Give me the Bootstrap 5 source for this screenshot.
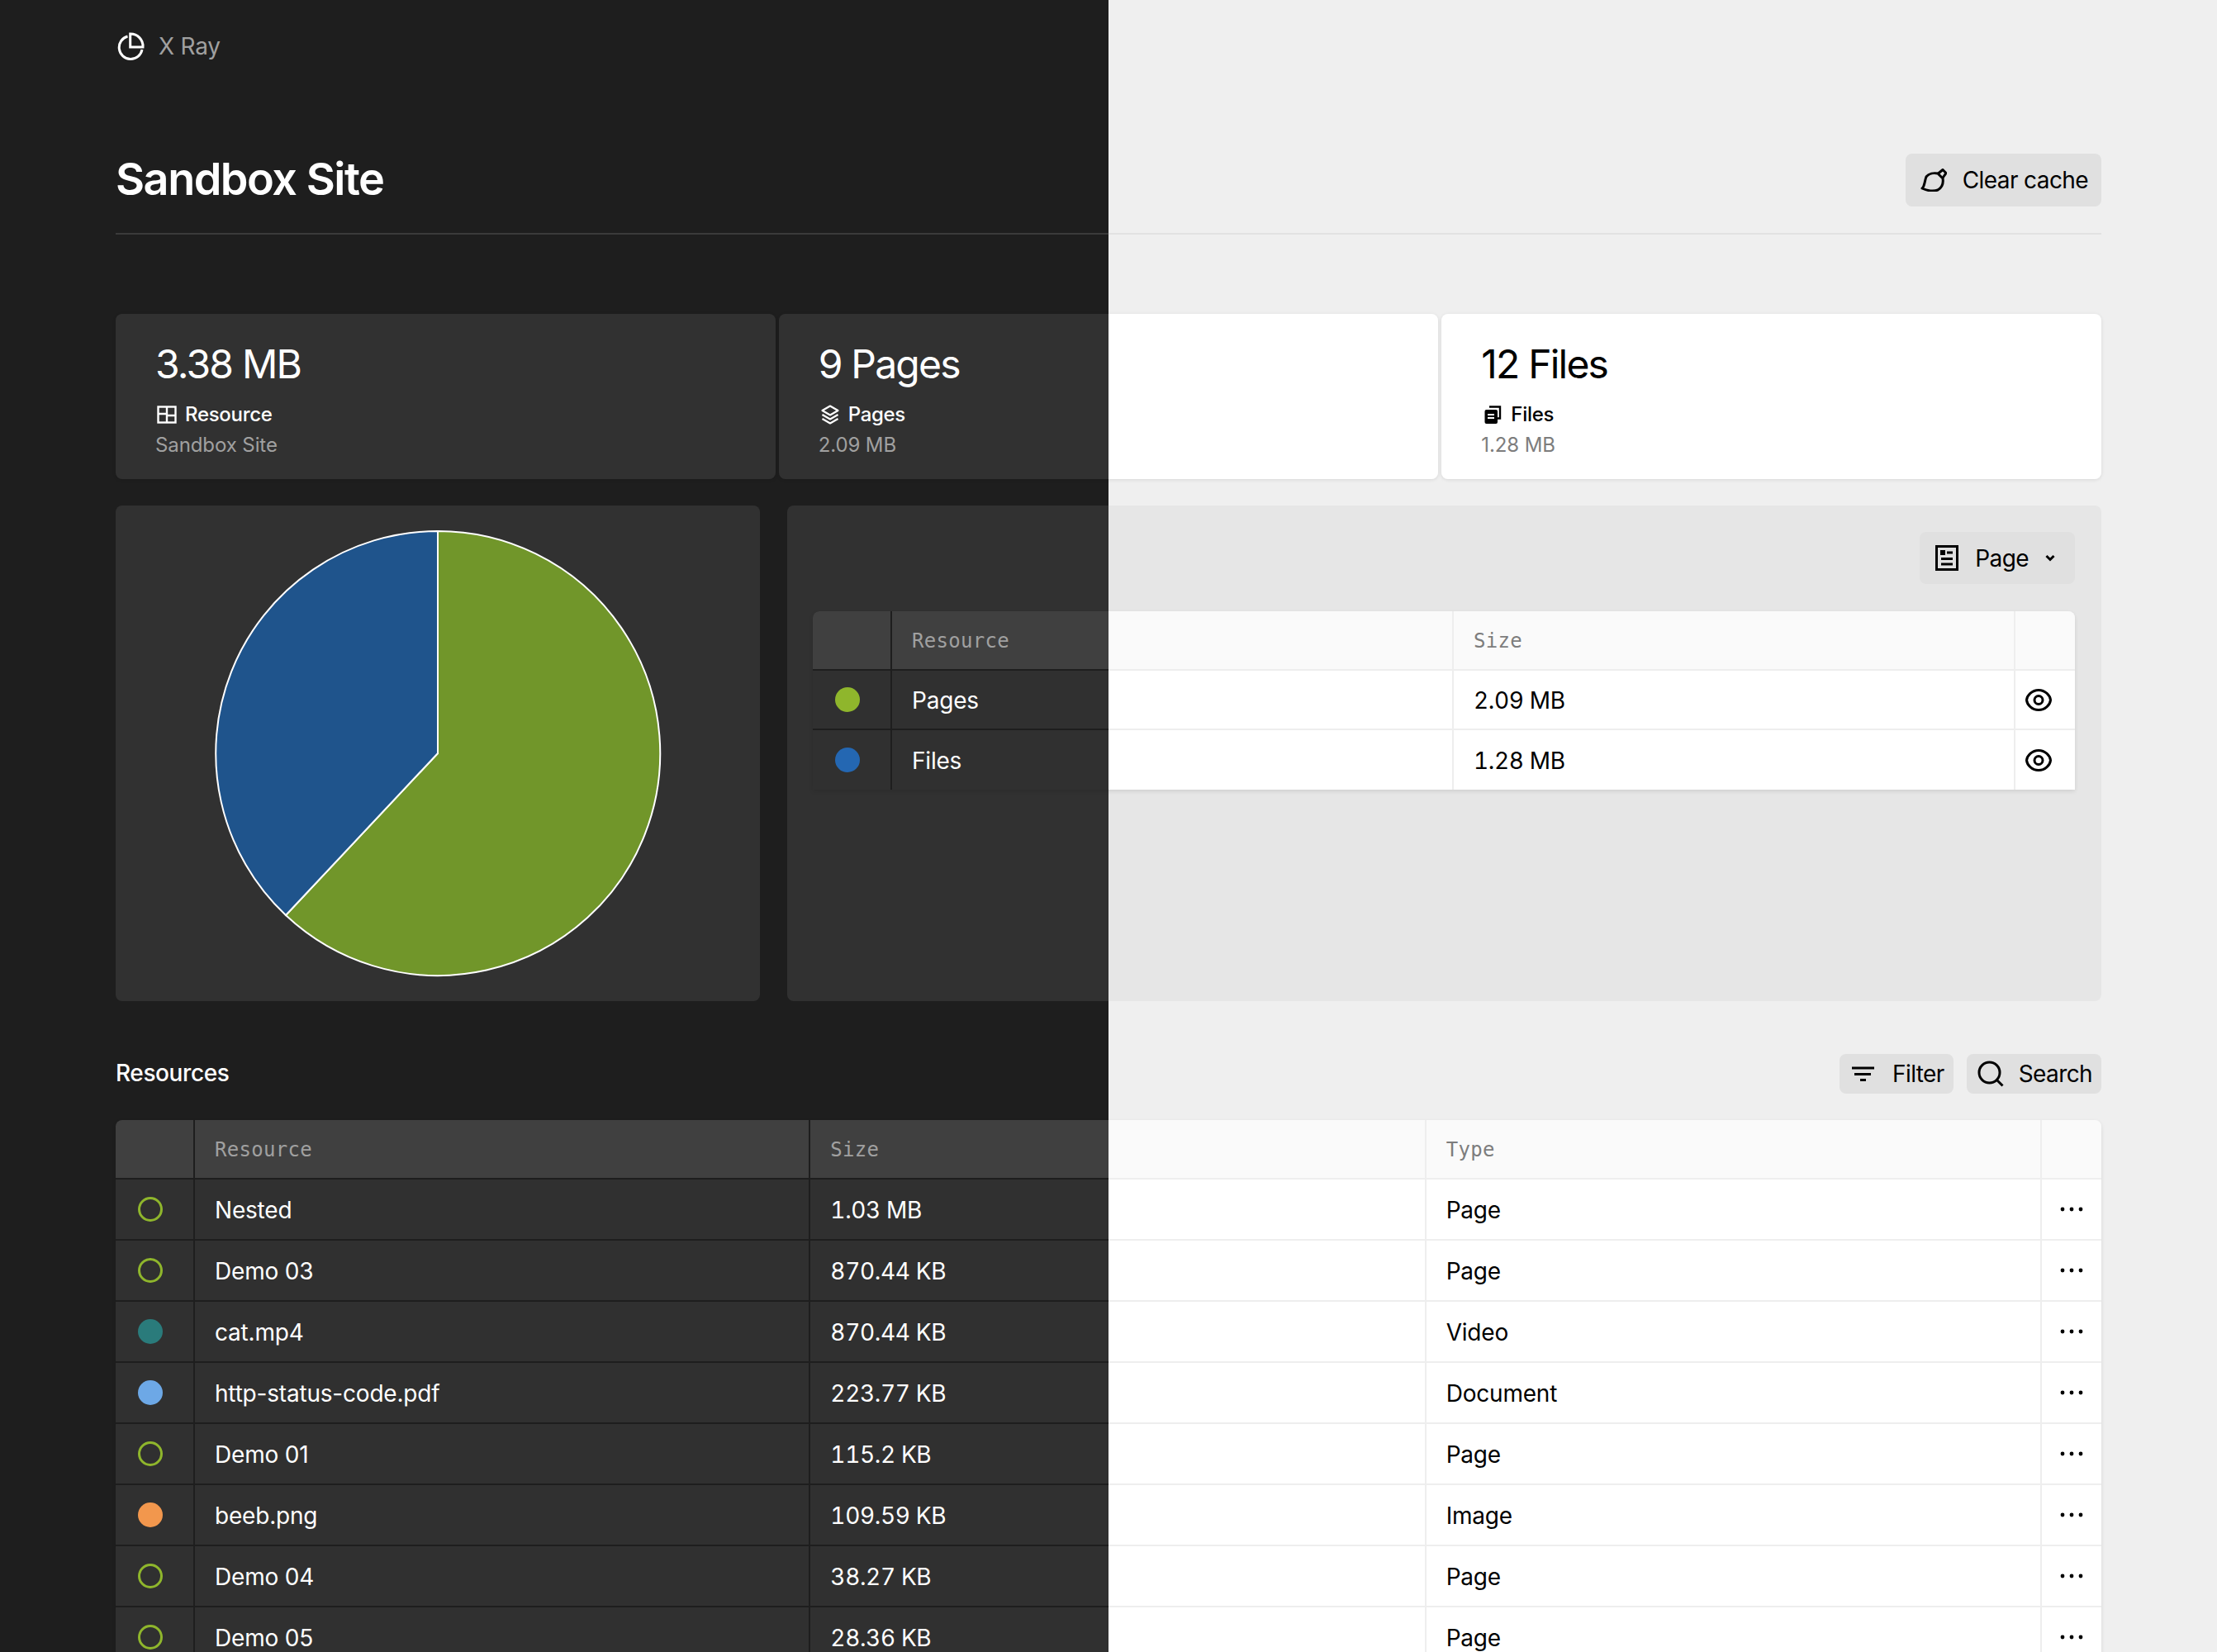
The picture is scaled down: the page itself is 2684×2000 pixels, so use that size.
<!DOCTYPE html>
<html lang="en">
<head>
  <meta charset="UTF-8">
  <title>X Ray</title>
  <meta name="viewport" content="width=device-width, initial-scale=1">
  <link href="https://cdn.jsdelivr.net/npm/bootstrap@5.3.0/dist/css/bootstrap.min.css" rel="stylesheet">
  <style>
    /* the page is split in dark/light at x=1342, surfaces share one fixed gradient */
    :root { --cut: 1342px; }
    html, body { height: 100%; }
    body { background: linear-gradient(90deg, #1e1e1e var(--cut), #efefef var(--cut)) fixed; font-family: Inter, "Liberation Sans", sans-serif; font-size: 28px; letter-spacing: -.2px; color: #000; overflow: hidden; }
    .sheet { height: 2000px; overflow: hidden; padding: 36px 140px 0; }
    .tx-d { color: #fff; }
    .tx-l { color: #000; }
    .tx-mute-d { color: #a0a0a0; }
    .tx-mute-l { color: #7d7d7d; }

    .topbar { height: 40px; gap: 16px; }
    .topbar svg { margin-left: 2px; }
    .head-row { height: 64px; margin-top: 110px; }
    .site-title { font-size: 54px; font-weight: 600; letter-spacing: -1.5px; margin: -2px 0 0; line-height: 64px; }
    .head-rule { height: 2px; margin: 32px 0 0; border: 0; opacity: 1; background: linear-gradient(90deg, #3a3a3a var(--cut), #e2e2e2 var(--cut)) fixed; }

    .tool-btn { --bs-btn-border-width: 0; --bs-btn-padding-x: 0; --bs-btn-padding-y: 0; --bs-btn-font-size: 28px; --bs-btn-bg: #e0e0e0; --bs-btn-hover-bg: #d8d8d8; --bs-btn-color: #000; --bs-btn-hover-color: #000; --bs-btn-border-radius: 8px; display: inline-flex; align-items: center; font-family: inherit; letter-spacing: -.6px; }
    .btn-clear { height: 64px; padding: 0 16px 0 18px; gap: 19px; }
    .btn-page { height: 63px; padding: 0 24px 0 19px; gap: 20px; }
    .btn-filter { height: 48px; padding: 0 11px 0 15px; gap: 22px; }
    .btn-search { height: 48px; padding: 0 11px 0 13px; gap: 18px; }

    .stats { display: grid; grid-template-columns: repeat(3, 1fr); gap: 4px; margin-top: 96px; }
    .stat-box { height: 200px; padding: 37px 48px 0; border-radius: 8px; background: linear-gradient(90deg, #313131 var(--cut), #fff var(--cut)) fixed; box-shadow: 0 1px 4px rgba(0,0,0,.1); }
    .stat-value { font-size: 48px; line-height: 48px; letter-spacing: -1.8px; }
    .stat-label { font-size: 24px; line-height: 36px; margin-top: 19px; gap: 10px; font-weight: 500; letter-spacing: -.3px; }
    .stat-label svg { margin-left: 2px; }
    .stat-sub { font-size: 24px; line-height: 36px; margin-top: 1px; letter-spacing: -.1px; }

    .panels { display: grid; grid-template-columns: 780px 1fr; gap: 33px; margin-top: 32px; height: 600px; }
    .panel-box { border-radius: 8px; background: linear-gradient(90deg, #313131 var(--cut), #e6e6e6 var(--cut)) fixed; }
    .panel-side { padding: 32px 32px 32px 31px; }
    .panel-side .tbl-wrap { margin-top: 33px; }

    .section-row { height: 48px; margin-top: 64px; }
    .section-title { font-size: 28px; font-weight: 500; margin: 0; letter-spacing: -.4px; }
    .section-tools { gap: 16px; }
    .section-table { margin-top: 32px; }

    /* row and column lines are the wrapper's gradient showing through transparent cell borders */
    .tbl-wrap { border-radius: 8px 8px 0 0; overflow: hidden; box-shadow: 0 2px 5px rgba(0,0,0,.1); background: linear-gradient(90deg, #1e1e1e var(--cut), #eee var(--cut)) fixed; }
    .data-table { --bs-table-bg: transparent; table-layout: fixed; border-collapse: separate; border-spacing: 0; margin: 0; }
    .data-table > :not(caption) > * > * { padding: 2px 24px 0; border: solid transparent; border-width: 0 2px 2px 0; vertical-align: middle; font-size: 28px; font-weight: 400; background: linear-gradient(90deg, #303030 var(--cut), #fff var(--cut)) padding-box fixed; }
    .data-table .tx-d { color: #fff; }
    .data-table .tx-l { color: #000; }
    .data-table .tx-mute-d { color: #a0a0a0; }
    .data-table .tx-mute-l { color: #7d7d7d; }
    .data-table .size-cell { font-variant-numeric: tabular-nums; letter-spacing: -.35px; }
    .data-table > thead > tr > th { height: 72px; font-family: "DejaVu Sans Mono", monospace; font-size: 24px; letter-spacing: .3px; background: linear-gradient(90deg, #404040 var(--cut), #fafafa var(--cut)) padding-box fixed; }
    .data-table > :not(caption) > * > *:last-child { border-right-width: 0; }
    .data-table tbody td { height: 74px; }
    .mini-table tbody td { height: 72px; }
    .mini-table > tbody > tr:last-child > td { border-bottom-width: 0; height: 72px; }
    .data-table > :not(caption) > * > .dot-col { width: 96px; padding: 0 0 0 27px; }
    .data-table > :not(caption) > * > .act-col { width: 72px; padding: 0; }

    .res-dot { display: block; width: 30px; height: 30px; border-radius: 50%; }
    .res-dot.ring { border: 3.5px solid #8fb62c; }
    .act-eye { display: block; margin-left: 12px; }
    .act-more { display: block; margin: 0 auto; }
  </style>
</head>
<body>

<div class="sheet">

  <!-- Top bar -->
  <div class="topbar d-flex align-items-center tx-mute-d">
    <svg width="34" height="34" viewBox="0 0 34 34" fill="none" stroke="#fff" stroke-width="3"><path d="M12.5 5A14 14 0 1 0 30 21"/><path d="M15.7 2A15 15 0 0 1 31 18H15.7Z"/></svg>
    <span>X Ray</span>
  </div>

  <!-- Title -->
  <div class="head-row d-flex align-items-center justify-content-between">
    <h1 class="site-title tx-d">Sandbox Site</h1>
    <button class="btn tool-btn btn-clear" type="button">
      <svg width="32" height="28" viewBox="0 0 32 28" fill="none" stroke="#000" stroke-width="3" stroke-linejoin="round"><path d="M7 10C10 6 16 5 21 6L27 12C28 18 26 23 21 26C16 28 8 27 2 24C5 22 5 15 7 10Z"/><path d="M21.5 6L27 1.5L31 5.5L26.5 12"/></svg>
      Clear cache
    </button>
  </div>
  <hr class="head-rule">

  <!-- Totals -->
  <div class="stats">
    <div class="stat-box">
      <div class="stat-value tx-d">3.38 MB</div>
      <div class="stat-label d-flex align-items-center tx-d">
        <svg width="24" height="22" viewBox="0 0 24 22" fill="none" stroke="#fff" stroke-width="2.4"><rect x="1.5" y="1.5" width="21" height="19"/><path d="M12 1.5V20.5M1.5 10H12M12 12H22.5"/></svg>
        <span>Resource</span>
      </div>
      <div class="stat-sub tx-mute-d">Sandbox Site</div>
    </div>
    <div class="stat-box">
      <div class="stat-value tx-d">9 Pages</div>
      <div class="stat-label d-flex align-items-center tx-d">
        <svg width="24" height="24" viewBox="0 0 24 24" fill="none" stroke="#fff" stroke-width="2.2" stroke-linejoin="round"><path d="M12 1.5L21.5 7L12 12.5L2.5 7Z"/><path d="M2.5 12L12 17.5L21.5 12"/><path d="M2.5 17L12 22.5L21.5 17"/></svg>
        <span>Pages</span>
      </div>
      <div class="stat-sub tx-mute-d">2.09 MB</div>
    </div>
    <div class="stat-box">
      <div class="stat-value tx-l">12 Files</div>
      <div class="stat-label d-flex align-items-center tx-l">
        <svg width="24" height="24" viewBox="0 0 24 24"><path d="M8 2.5H21V16.5H18" fill="none" stroke="#000" stroke-width="2.4"/><rect x="2.5" y="6" width="15.5" height="17" rx="2" fill="#000"/><path d="M6 12H14M6 16H14" stroke="#fff" stroke-width="2"/></svg>
        <span>Files</span>
      </div>
      <div class="stat-sub tx-mute-l">1.28 MB</div>
    </div>
  </div>

  <!-- Chart and breakdown -->
  <div class="panels">
    <div class="panel-box d-flex align-items-center justify-content-center">
      <svg width="542" height="542" viewBox="-271 -271 542 542">
        <path d="M0 0L0 -269A269 269 0 1 1 -184 196Z" fill="#71962a" stroke="#fff" stroke-width="2"/>
        <path d="M0 0L-184 196A269 269 0 0 1 0 -269Z" fill="#1f548c" stroke="#fff" stroke-width="2"/>
      </svg>
    </div>
    <div class="panel-box panel-side">
      <div class="d-flex justify-content-end">
        <button class="btn tool-btn btn-page" type="button">
          <svg width="28" height="31" viewBox="0 0 28 31" fill="none" stroke="#000" stroke-width="3"><rect x="1.5" y="1.5" width="25" height="28"/><path d="M14 9H21M7 16.5H21M7 23H21"/><rect x="6" y="6" width="6" height="6" fill="#000" stroke="none"/></svg>
          <span>Page</span>
          <svg width="12" height="9" viewBox="0 0 12 9" fill="none" stroke="#000" stroke-width="3"><path d="M1.5 2L6 6.5L10.5 2"/></svg>
        </button>
      </div>
      <div class="tbl-wrap">
        <table class="table data-table mini-table">
          <thead>
            <tr>
              <th class="dot-col"></th>
              <th class="tx-mute-d">Resource</th>
              <th class="tx-mute-l">Size</th>
              <th class="act-col"></th>
            </tr>
          </thead>
          <tbody id="type-rows"></tbody>
        </table>
      </div>
    </div>
  </div>

  <!-- Resources -->
  <div class="section-row d-flex align-items-center justify-content-between">
    <h2 class="section-title tx-d">Resources</h2>
    <div class="section-tools d-flex">
      <button class="btn tool-btn btn-filter" type="button">
        <svg width="27" height="18" viewBox="0 0 27 18" fill="none" stroke="#000" stroke-width="3"><path d="M0 2H27M3 9.5H23M10 16.5H17"/></svg>
        Filter
      </button>
      <button class="btn tool-btn btn-search" type="button">
        <svg width="32" height="32" viewBox="0 0 32 32" fill="none" stroke="#000" stroke-width="3"><circle cx="14.5" cy="14.5" r="12.5"/><path d="M23.5 23.5L30.5 30.5"/></svg>
        Search
      </button>
    </div>
  </div>

  <div class="tbl-wrap section-table">
    <table class="table data-table">
      <thead>
        <tr>
          <th class="dot-col"></th>
          <th class="tx-mute-d">Resource</th>
          <th class="tx-mute-d">Size</th>
          <th class="tx-mute-l">Type</th>
          <th class="act-col"></th>
        </tr>
      </thead>
      <tbody id="resource-rows"></tbody>
    </table>
  </div>

</div>

<script src="https://cdn.jsdelivr.net/npm/bootstrap@5.3.0/dist/js/bootstrap.bundle.min.js"></script>
<script>
  const eyeIcon = '<svg class="act-eye" width="32" height="27" viewBox="0 0 32 27" fill="none" stroke="#000" stroke-width="3"><path d="M16 1.5C24 1.5 30 8 30.5 13.5C30 19 24 25.5 16 25.5C8 25.5 2 19 1.5 13.5C2 8 8 1.5 16 1.5Z"/><circle cx="16" cy="13.5" r="5"/></svg>';
  const moreIcon = '<svg class="act-more" width="28" height="6" viewBox="0 0 28 6" fill="#000"><circle cx="3" cy="3" r="2.4"/><circle cx="14" cy="3" r="2.4"/><circle cx="25" cy="3" r="2.4"/></svg>';

  const types = [
    { name: 'Pages', size: '2.09 MB', color: '#8fb62c' },
    { name: 'Files', size: '1.28 MB', color: '#2467b2' }
  ];
  document.getElementById('type-rows').innerHTML = types.map((t) => `
    <tr>
      <td class="dot-col"><span class="res-dot" style="background:${t.color}"></span></td>
      <td class="tx-d">${t.name}</td>
      <td class="tx-l size-cell">${t.size}</td>
      <td class="act-col">${eyeIcon}</td>
    </tr>`).join('');

  const resources = [
    ['Nested', '1.03 MB', 'Page', null],
    ['Demo 03', '870.44 KB', 'Page', null],
    ['cat.mp4', '870.44 KB', 'Video', '#2a7b7b'],
    ['http-status-code.pdf', '223.77 KB', 'Document', '#6da8e6'],
    ['Demo 01', '115.2 KB', 'Page', null],
    ['beeb.png', '109.59 KB', 'Image', '#f2974d'],
    ['Demo 04', '38.27 KB', 'Page', null],
    ['Demo 05', '28.36 KB', 'Page', null]
  ];
  document.getElementById('resource-rows').innerHTML = resources.map(([name, size, type, color]) => `
    <tr>
      <td class="dot-col"><span class="res-dot ${color ? '' : 'ring'}" ${color ? `style="background:${color}"` : ''}></span></td>
      <td class="tx-d">${name}</td>
      <td class="tx-d size-cell">${size}</td>
      <td class="tx-l">${type}</td>
      <td class="act-col">${moreIcon}</td>
    </tr>`).join('');
</script>

</body>
</html>
